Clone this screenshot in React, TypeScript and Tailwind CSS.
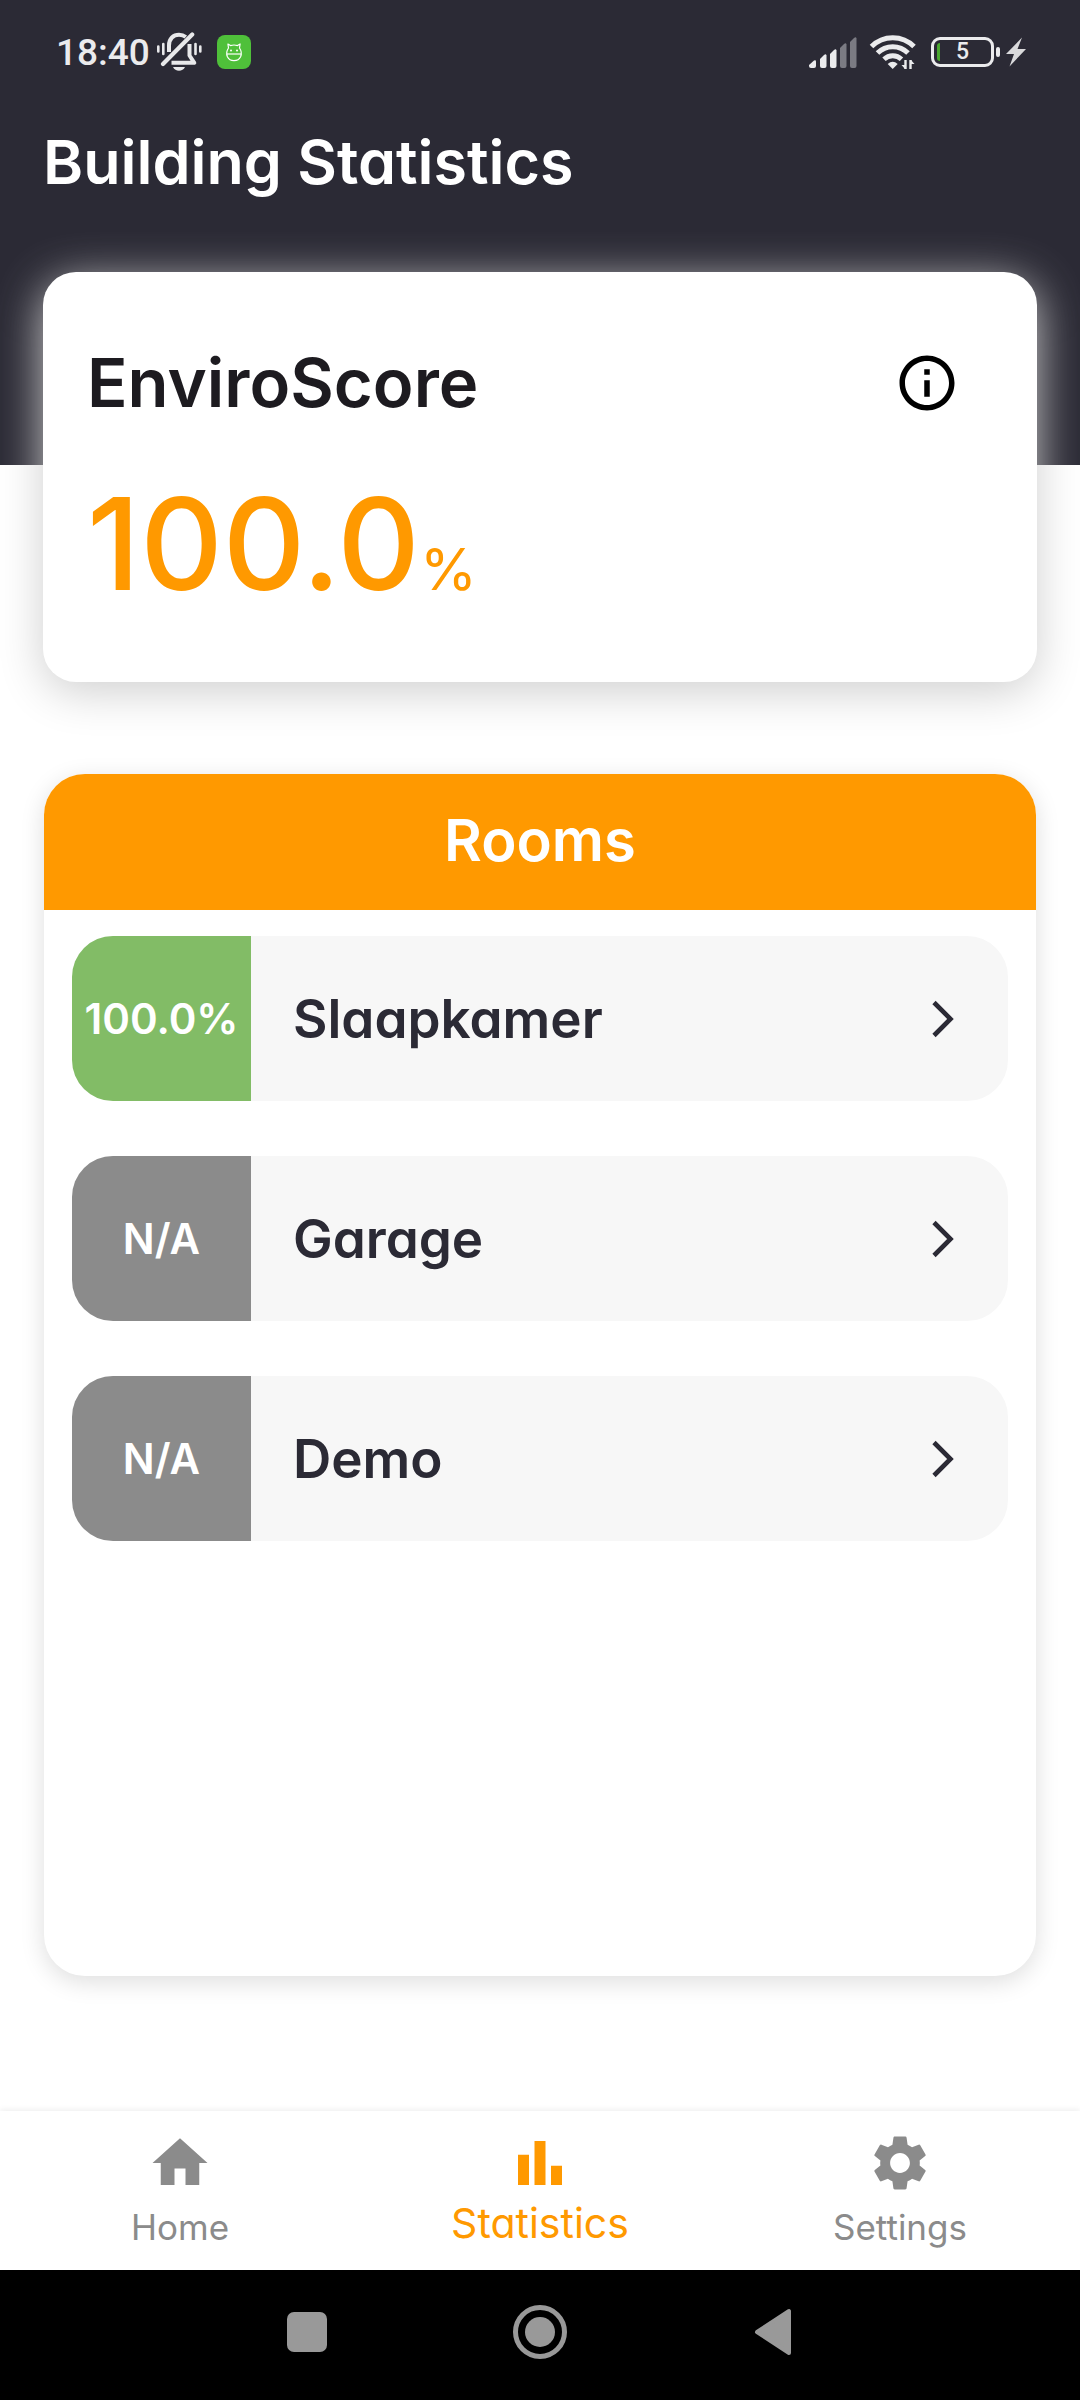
import type { ReactNode } from "react";
import { MdBarChart, MdHome, MdInfoOutline, MdSettings } from "react-icons/md";

type Room = { name: string; score: string; scored: boolean };

const rooms: Room[] = [
  { name: "Slaapkamer", score: "100.0%", scored: true },
  { name: "Garage", score: "N/A", scored: false },
  { name: "Demo", score: "N/A", scored: false },
];

function MutedBell() {
  return (
    <svg width="46" height="40" viewBox="0 0 46 40" fill="none" stroke="#e8e8ea" aria-hidden="true">
      <path d="M13 20V13.500C13 6.500 17.500 2.800 23 2.800c3 0 5 .8 6.800 2.200" strokeWidth="4" />
      <path d="M33.500 12v11.500l4.800 7.300H15.500" strokeWidth="4" strokeLinejoin="round" />
      <path d="M36.200 2.500L7 32" strokeWidth="4.200" strokeLinecap="round" />
      <path d="M17 35h12c-1.200 2.600-3.400 3.700-6 3.700S18.200 37.600 17 35z" fill="#e8e8ea" stroke="none" />
      <path d="M2.300 14.500v5M7.300 12v10M39.500 12v10M44.300 14.500v5" strokeWidth="2.600" strokeLinecap="round" />
    </svg>
  );
}

function AppBadge() {
  return (
    <svg width="34" height="34" viewBox="0 0 34 34" fill="none" aria-hidden="true">
      <rect width="34" height="34" rx="8" fill="#4fc03a" />
      <g stroke="#ffffff" strokeWidth="1.200" strokeLinejoin="round">
        <path d="M11.500 13l-.6-4 2.600 1.600c2.300-.8 4.700-.8 7 0L23.100 9l-.6 4c2.100 3 2.100 6.300 1.100 8.700-1.200 2.600-3.600 3.900-6.600 3.900s-5.400-1.300-6.600-3.900c-1-2.400-1-5.700 1.100-8.700z" />
        <path d="M9.800 19h14.400" />
      </g>
      <circle cx="14" cy="15.500" r="1" fill="#fff" />
      <circle cx="20" cy="15.500" r="1" fill="#fff" />
    </svg>
  );
}

function SignalBars() {
  return (
    <svg width="48" height="31" viewBox="0 0 48 31" aria-hidden="true">
      <g fill="#ebebed">
        <path d="M0 28l5-4.500q2-1 2 1V29q0 2-2 2H2q-2 0-2-2z" />
        <path d="M11 22l4-4q2-1.500 2.500.5V29q0 2-2 2H13q-2 0-2-2z" />
        <path d="M21 17l4-4q2-1.500 2.500.5V29q0 2-2 2H23q-2 0-2-2z" />
      </g>
      <g fill="#7b7b83">
        <path d="M31 11l4-4q2-1.500 2.500.5V29q0 2-2 2H33q-2 0-2-2z" />
        <path d="M41 5l4-4q2-1.500 2.500.5V29q0 2-2 2H43q-2 0-2-2z" />
      </g>
    </svg>
  );
}

function WifiSignal() {
  return (
    <svg width="48" height="38" viewBox="0 0 48 38" fill="none" stroke="#ebebed" aria-hidden="true">
      <path d="M2.500 13.500a30 30 0 0 1 42.500 0" strokeWidth="5" />
      <path d="M8.500 20a21.500 21.500 0 0 1 30.500 0" strokeWidth="5" />
      <path d="M15 26.300a12.500 12.500 0 0 1 17.500 0" strokeWidth="4.800" />
      <path d="M18.700 31q5-4.500 10 0l-5 5z" fill="#ebebed" stroke="none" />
      <path d="M36.500 27v9M41.500 27v9" strokeWidth="2.400" />
      <path d="M32.500 32h3.500v4zM45.500 31H42v-4z" fill="#ebebed" stroke="none" />
    </svg>
  );
}

function Bolt() {
  return (
    <svg width="20" height="30" viewBox="0 0 20 30" fill="#d9d9db" aria-hidden="true">
      <path d="M16 .5L0 17h8L3.500 29.500 20 12h-8.500z" />
    </svg>
  );
}

function Chevron() {
  return (
    <svg width="22" height="38" viewBox="0 0 22 38" fill="none" stroke="#2b2a35" strokeWidth="4.600" aria-hidden="true">
      <path d="M2 2.500L18.500 19 2 35.500" />
    </svg>
  );
}

function StatusBar() {
  return (
    <div className="flex h-26 items-center justify-between pr-[54px] pl-14 font-['Roboto',sans-serif] text-[#ebebed]">
      <div className="flex items-center">
        <span className="pt-0.5 text-[37px] leading-10 font-medium">18:40</span>
        <span className="ml-1.5">
          <MutedBell />
        </span>
        <span className="ml-[15px]">
          <AppBadge />
        </span>
      </div>
      <div className="flex items-center">
        <SignalBars />
        <span className="ml-3">
          <WifiSignal />
        </span>
        <div className="ml-3.5 flex items-center gap-0.5">
          <div className="flex h-[30px] w-[63px] items-center rounded-[9px] border-3 border-[#ebebed] pl-[3px]">
            <span className="h-[18px] w-[3px] rounded-l-sm bg-[#4aa82f]" />
            <span className="flex-1 pr-1.5 text-center text-[23px] leading-6 font-medium">5</span>
          </div>
          <span className="h-2.5 w-1 rounded-sm bg-[#ebebed]" />
        </div>
        <span className="ml-1.5">
          <Bolt />
        </span>
      </div>
    </div>
  );
}

function RoomRow({ room }: { room: Room }) {
  return (
    <li>
      <button
        type="button"
        className="flex h-[165px] w-full items-stretch overflow-hidden rounded-[41px] bg-[#f7f7f7] text-left"
      >
        <span
          className={
            room.scored
              ? "flex w-[179px] shrink-0 items-center justify-center bg-[#82bc66] text-[42px] leading-14 font-semibold text-white"
              : "flex w-[179px] shrink-0 items-center justify-center bg-[#8b8b8b] text-[42px] leading-14 font-semibold text-white"
          }
        >
          {room.score}
        </span>
        <span className="flex flex-1 items-center justify-between pr-[54px] pl-[42px] text-[53px] leading-16 font-semibold text-[#2b2a35]">
          {room.name}
          <Chevron />
        </span>
      </button>
    </li>
  );
}

function NavItem({ icon, label, active = false }: { icon: ReactNode; label: string; active?: boolean }) {
  return (
    <a
      href="#"
      aria-current={active ? "page" : undefined}
      className={
        active
          ? "flex flex-1 flex-col items-center pt-[19px] text-[41px] leading-[54px] text-[#ff9900]"
          : "flex flex-1 flex-col items-center pt-[19px] text-[35px] leading-[62px] text-[#8b8b8b]"
      }
    >
      {icon}
      <span>{label}</span>
    </a>
  );
}

export default function App() {
  return (
    <div className="flex min-h-screen flex-col bg-white font-['Inter',sans-serif] [font-feature-settings:'cv11']">
      <header className="h-[465px] bg-[#2b2a35]">
        <StatusBar />
        <h1 className="mt-[18px] px-[43px] text-[61px] leading-20 font-semibold text-white">Building Statistics</h1>
      </header>

      <main className="flex flex-1 flex-col px-[43px] pb-[135px]">
        <section className="relative -mt-[193px] h-[410px] rounded-[33px] bg-white px-11 pt-[66px] shadow-[0_10px_46px_#cfcfcf]">
          <div className="flex items-center justify-between pr-[33px]">
            <h2 className="text-[67px] leading-[90px] font-semibold text-[#1d1b20]">EnviroScore</h2>
            <button type="button" aria-label="About EnviroScore" className="text-black">
              <MdInfoOutline size={66} />
            </button>
          </div>
          <p className="mt-9 flex items-baseline text-[#ff9900]">
            <span className="text-[128px] leading-40 font-medium">100.0</span>
            <span className="text-[58px] leading-16">%</span>
          </p>
        </section>

        <section className="mx-px mt-[92px] flex flex-1 flex-col rounded-[41px] bg-white shadow-[0_6px_24px_#dedede]">
          <h2 className="rounded-t-[41px] bg-[#ff9900] pt-[26px] pb-[30px] text-center text-[58px] leading-20 font-semibold text-white">
            Rooms
          </h2>
          <ul className="flex flex-col gap-[55px] px-7 pt-[26px]">
            {rooms.map((room) => (
              <RoomRow key={room.name} room={room} />
            ))}
          </ul>
        </section>
      </main>

      <nav className="flex h-[159px] bg-white shadow-[0_-1px_6px_#ececec]">
        <NavItem icon={<MdHome size={66} />} label="Home" />
        <NavItem icon={<MdBarChart size={66} />} label="Statistics" active />
        <NavItem icon={<MdSettings size={66} />} label="Settings" />
      </nav>

      <div className="h-[130px] bg-black">
        <div className="mx-auto grid h-[124px] max-w-[699px] grid-cols-3 place-items-center">
          <button type="button" aria-label="Recent apps" className="size-10 rounded-[7px] bg-[#999999]" />
          <button type="button" aria-label="Home screen" className="rounded-full border-5 border-[#999999] p-[7px]">
            <span className="block size-[30px] rounded-full bg-[#999999]" />
          </button>
          <button type="button" aria-label="Back">
            <svg width="38" height="48" viewBox="0 0 38 48" fill="#999999" stroke="#999999" strokeWidth="4" strokeLinejoin="round">
              <path d="M35 3v42L3 24z" />
            </svg>
          </button>
        </div>
      </div>
    </div>
  );
}
